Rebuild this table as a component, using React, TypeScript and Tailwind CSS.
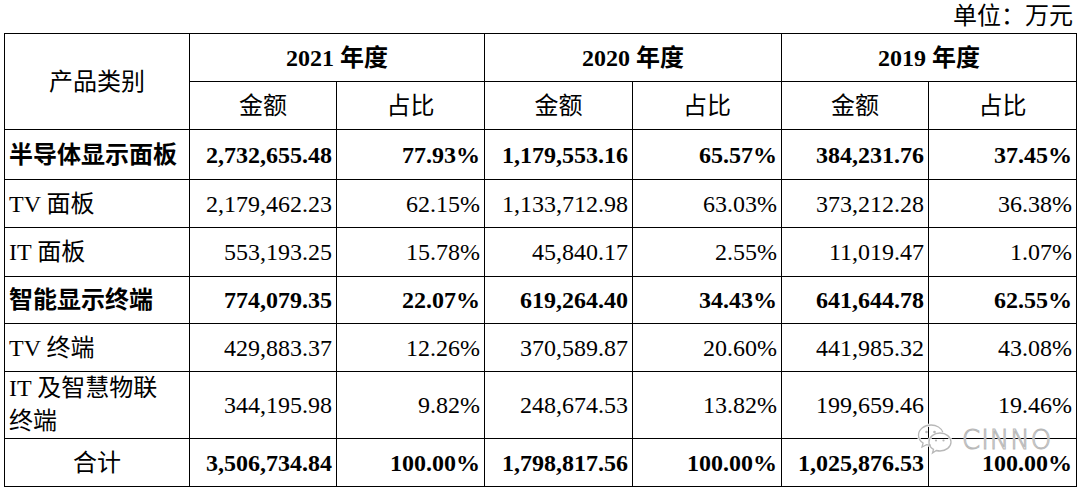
const rows = [
  { label: "半导体显示面板", bold: true, v: ["2,732,655.48", "77.93%", "1,179,553.16", "65.57%", "384,231.76", "37.45%"], h: "h-[50px]" },
  { label: "TV 面板", bold: false, v: ["2,179,462.23", "62.15%", "1,133,712.98", "63.03%", "373,212.28", "36.38%"], h: "h-[48px]" },
  { label: "IT 面板", bold: false, v: ["553,193.25", "15.78%", "45,840.17", "2.55%", "11,019.47", "1.07%"], h: "h-[49px]" },
  { label: "智能显示终端", bold: true, v: ["774,079.35", "22.07%", "619,264.40", "34.43%", "641,644.78", "62.55%"], h: "h-[47px]" },
  { label: "TV 终端", bold: false, v: ["429,883.37", "12.26%", "370,589.87", "20.60%", "441,985.32", "43.08%"], h: "h-[48px]" },
];

const cell = "border border-black px-[4px] align-middle";

function WeChatMark() {
  return (
    <svg width="38" height="36" viewBox="0 0 38 36" fill="none">
      <g stroke="#ffffff" strokeWidth="3" opacity="0.9">
        <path d="M15 3C8 3 2.5 7.6 2.5 13.2c0 3.2 1.8 6 4.6 7.8L6 25l4.6-2.4c1.4.4 2.9.6 4.4.6" />
        <path d="M24 11c6 0 11 4 11 9s-5 9-11 9c-1.3 0-2.5-.2-3.7-.5L16.5 31l1-3.6C14.8 25.8 13 23.1 13 20c0-5 5-9 11-9z" />
      </g>
      <g stroke="#b8b8b8" strokeWidth="1.3">
        <path d="M15 3C8 3 2.5 7.6 2.5 13.2c0 3.2 1.8 6 4.6 7.8L6 25l4.6-2.4c1.4.4 2.9.6 4.4.6" />
        <path d="M15 3c5.6 0 10.3 3 11.8 7.2" />
        <path d="M24 11c6 0 11 4 11 9s-5 9-11 9c-1.3 0-2.5-.2-3.7-.5L16.5 31l1-3.6C14.8 25.8 13 23.1 13 20c0-5 5-9 11-9z" />
      </g>
      <g fill="#b8b8b8">
        <circle cx="10.5" cy="10" r="1.3" />
        <circle cx="18.5" cy="10" r="1.3" />
        <circle cx="20" cy="18.5" r="1.1" />
        <circle cx="27.5" cy="18.5" r="1.1" />
      </g>
    </svg>
  );
}

export default function App() {
  return (
    <div
      className="relative w-[1080px] h-[489px] bg-white text-black overflow-hidden"
      style={{ fontFamily: '"Liberation Serif", "Noto Sans CJK SC", serif' }}
    >
      <div className="h-[33px] pr-[7px] text-right text-[24px] leading-[33px]">单位：万元</div>
      <table className="ml-[4px] w-[1073px] border-collapse table-fixed text-[24px] leading-[30px]">
        <colgroup>
          <col className="w-[185px]" />
          <col className="w-[147px]" />
          <col className="w-[148px]" />
          <col className="w-[148px]" />
          <col className="w-[149px]" />
          <col className="w-[147px]" />
          <col className="w-[148px]" />
        </colgroup>
        <thead>
          <tr className="h-[48px]">
            <th rowSpan={2} className={`${cell} text-center font-normal`}>产品类别</th>
            <th colSpan={2} className={`${cell} text-center font-bold`}>2021 年度</th>
            <th colSpan={2} className={`${cell} text-center font-bold`}>2020 年度</th>
            <th colSpan={2} className={`${cell} text-center font-bold`}>2019 年度</th>
          </tr>
          <tr className="h-[48px]">
            {["金额", "占比", "金额", "占比", "金额", "占比"].map((t, i) => (
              <th key={i} className={`${cell} text-center font-normal`}>{t}</th>
            ))}
          </tr>
        </thead>
        <tbody>
          {rows.map((r) => (
            <tr key={r.label} className={r.h}>
              <td className={`${cell} text-left whitespace-nowrap ${r.bold ? "font-bold" : ""}`}>{r.label}</td>
              {r.v.map((v, i) => (
                <td key={i} className={`${cell} text-right ${r.bold ? "font-bold" : ""}`}>{v}</td>
              ))}
            </tr>
          ))}
          <tr className="h-[66px]">
            <td className={`${cell} text-left leading-[33px]`}>
              IT 及智慧物联
              <br />
              终端
            </td>
            {["344,195.98", "9.82%", "248,674.53", "13.82%", "199,659.46", "19.46%"].map((v, i) => (
              <td key={i} className={`${cell} text-right`}>{v}</td>
            ))}
          </tr>
          <tr className="h-[48px]">
            <td className={`${cell} text-center`}>合计</td>
            {["3,506,734.84", "100.00%", "1,798,817.56", "100.00%", "1,025,876.53", "100.00%"].map((v, i) => (
              <td key={i} className={`${cell} text-right font-bold`}>{v}</td>
            ))}
          </tr>
        </tbody>
      </table>
      <div className="absolute left-[916px] top-[422px] flex items-center gap-[8px] pointer-events-none">
        <WeChatMark />
        <span
          className="text-[26px] leading-none tracking-[1px] text-transparent"
          style={{ fontFamily: '"DejaVu Sans", sans-serif', fontWeight: 200, WebkitTextStroke: "1px #b8b8b8", textShadow: "0 0 1px #fff" }}
        >
          CINNO
        </span>
      </div>
    </div>
  );
}
